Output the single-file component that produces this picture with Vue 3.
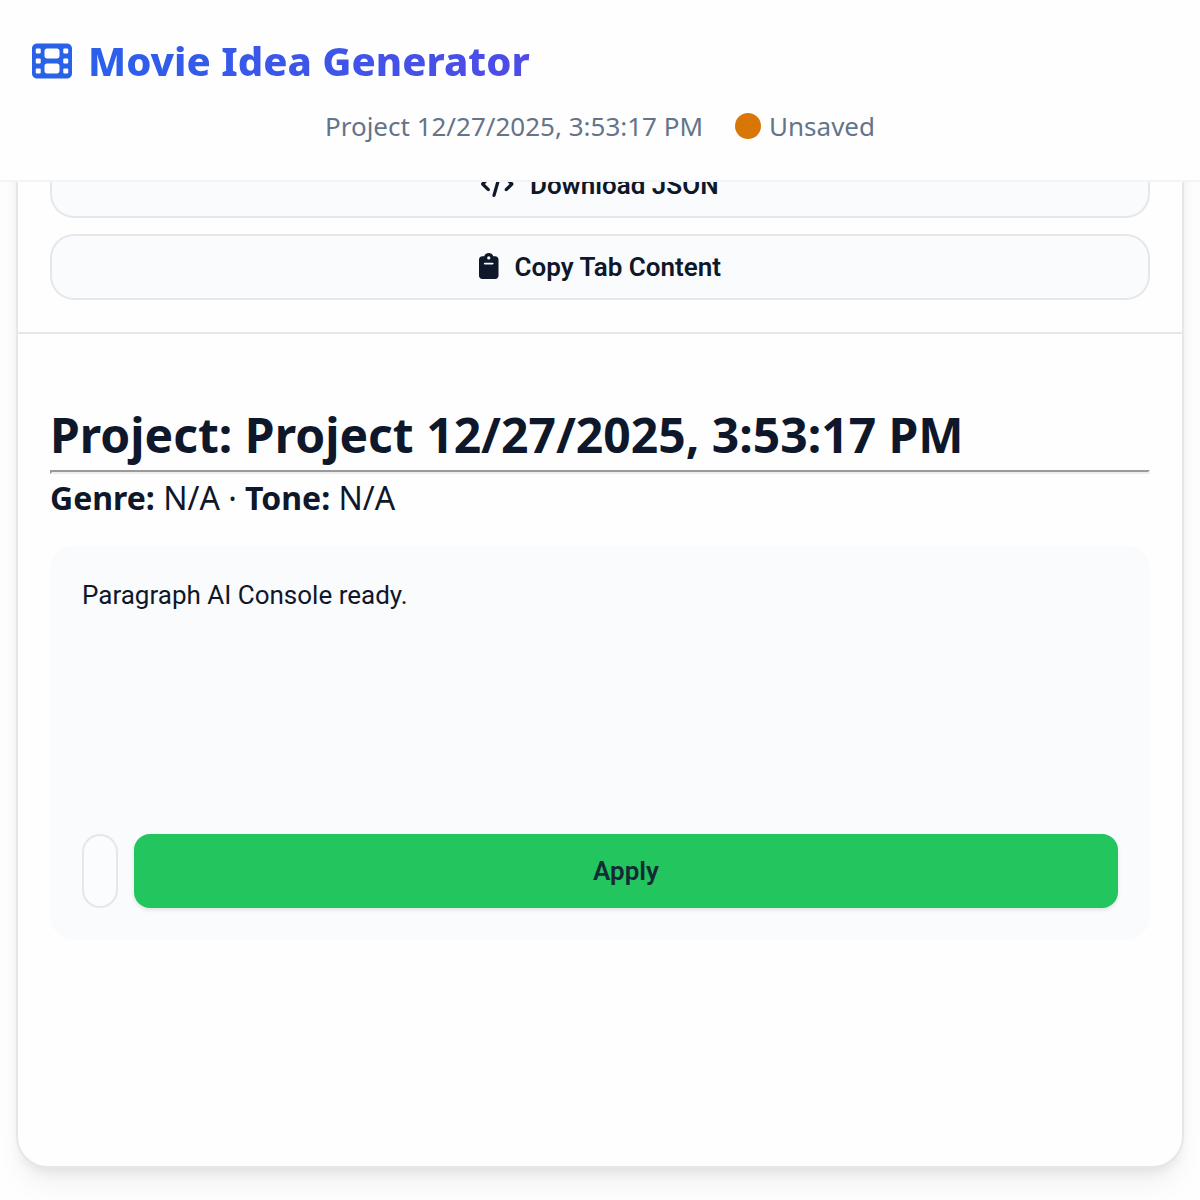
<template>
  <div class="page">
    <header class="app-header">
      <h1 class="brand">
        <svg class="brand-icon" viewBox="0 0 512 512">
          <path fill-rule="evenodd" :d="icons.film" />
        </svg>
        <span class="brand-text">Movie Idea Generator</span>
      </h1>
      <div class="status-bar">
        <span>{{ projectName }}</span>
        <span class="save-status"><i class="status-dot"></i>Unsaved</span>
      </div>
    </header>

    <main class="content">
      <section class="card">
        <div class="toolbar">
          <button v-for="action in actions" :key="action.label" class="action-btn">
            <svg class="action-icon" :viewBox="action.viewBox" :class="action.icon">
              <path :d="icons[action.icon]" />
            </svg>
            {{ action.label }}
          </button>
        </div>

        <div class="document">
          <h2 class="doc-title">Project: {{ projectName }}</h2>
          <hr class="doc-rule" />
          <p class="doc-meta"><strong>Genre:</strong> N/A · <strong>Tone:</strong> N/A</p>

          <div class="console">
            <div class="console-output">Paragraph AI Console ready.</div>
            <div class="console-actions">
              <button class="console-empty"></button>
              <button class="apply-btn">Apply</button>
            </div>
          </div>
        </div>
      </section>
    </main>
  </div>
</template>

<script setup>
const projectName = 'Project 12/27/2025, 3:53:17 PM'

const actions = [
  { label: 'Download JSON', icon: 'code', viewBox: '0 0 640 512' },
  { label: 'Copy Tab Content', icon: 'clipboard', viewBox: '0 0 384 512' }
]

const icons = {
  film: 'M0 96C0 60.7 28.7 32 64 32H448c35.3 0 64 28.7 64 64V416c0 35.3-28.7 64-64 64H64c-35.3 0-64-28.7-64-64V96zM48 368v32c0 8.8 7.2 16 16 16H96c8.8 0 16-7.2 16-16V368c0-8.8-7.2-16-16-16H64c-8.8 0-16 7.2-16 16zm368-16c-8.8 0-16 7.2-16 16v32c0 8.8 7.2 16 16 16h32c8.8 0 16-7.2 16-16V368c0-8.8-7.2-16-16-16H416zM48 240v32c0 8.8 7.2 16 16 16H96c8.8 0 16-7.2 16-16V240c0-8.8-7.2-16-16-16H64c-8.8 0-16 7.2-16 16zm368-16c-8.8 0-16 7.2-16 16v32c0 8.8 7.2 16 16 16h32c8.8 0 16-7.2 16-16V240c0-8.8-7.2-16-16-16H416zM48 112v32c0 8.8 7.2 16 16 16H96c8.8 0 16-7.2 16-16V112c0-8.8-7.2-16-16-16H64c-8.8 0-16 7.2-16 16zM416 96c-8.8 0-16 7.2-16 16v32c0 8.8 7.2 16 16 16h32c8.8 0 16-7.2 16-16V112c0-8.8-7.2-16-16-16H416zM160 128v64c0 17.7 14.3 32 32 32H320c17.7 0 32-14.3 32-32V128c0-17.7-14.3-32-32-32H192c-17.7 0-32 14.3-32 32zm32 160c-17.7 0-32 14.3-32 32v64c0 17.7 14.3 32 32 32H320c17.7 0 32-14.3 32-32V320c0-17.7-14.3-32-32-32H192z',
  code: 'M392.8 1.2c-17-4.9-34.7 5-39.6 22l-128 448c-4.9 17 5 34.7 22 39.6s34.7-5 39.6-22l128-448c4.9-17-5-34.7-22-39.6zm80.6 120.1c-12.5 12.5-12.5 32.8 0 45.3L562.7 256l-89.4 89.4c-12.5 12.5-12.5 32.8 0 45.3s32.8 12.5 45.3 0l112-112c12.5-12.5 12.5-32.8 0-45.3l-112-112c-12.5-12.5-32.8-12.5-45.3 0zm-306.7 0c-12.5-12.5-32.8-12.5-45.3 0l-112 112c-12.5 12.5-12.5 32.8 0 45.3l112 112c12.5 12.5 32.8 12.5 45.3 0s12.5-32.8 0-45.3L77.3 256l89.4-89.4c12.5-12.5 12.5-32.8 0-45.3z',
  clipboard: 'M192 0c-41.8 0-77.4 26.7-90.5 64H64C28.7 64 0 92.7 0 128V448c0 35.3 28.7 64 64 64H320c35.3 0 64-28.7 64-64V128c0-35.3-28.7-64-64-64H282.5C269.4 26.7 233.8 0 192 0zm0 64a32 32 0 1 1 0 64 32 32 0 1 1 0-64zM112 192H272c8.8 0 16 7.2 16 16s-7.2 16-16 16H112c-8.8 0-16-7.2-16-16s7.2-16 16-16z'
}
</script>

<style>
body {
  margin: 0;
  background: #fff;
}
</style>

<style scoped>
.page {
  display: flex;
  flex-direction: column;
  height: 1200px;
  overflow: hidden;
  box-sizing: border-box;
  background: #fefefe;
  color: #0f172a;
  font-family: "Noto Sans", sans-serif;
}

.page * {
  box-sizing: border-box;
}

.app-header {
  flex-shrink: 0;
  height: 182px;
  padding: 31px 32px 0;
  background: #fefefe;
  border-bottom: 2px solid #f3f4f6;
}

.brand {
  display: flex;
  align-items: center;
  gap: 16px;
  height: 60px;
  margin: 0;
  font-size: 40px;
  font-weight: 800;
  line-height: 60px;
}

.brand-icon {
  width: 40px;
  height: 40px;
  fill: #2962e8;
}

.brand-text {
  background: linear-gradient(90deg, #2b60eb, #4f4be6);
  -webkit-background-clip: text;
  background-clip: text;
  color: transparent;
}

.status-bar {
  display: flex;
  justify-content: center;
  gap: 32px;
  margin-top: 16px;
  color: #64748b;
  font-size: 26px;
  line-height: 39px;
}

.save-status {
  display: flex;
  align-items: center;
  gap: 8px;
}

.status-dot {
  width: 26px;
  height: 26px;
  margin-bottom: 1px;
  border-radius: 50%;
  background: #d97706;
}

/* anchored to the bottom, as when the page is scrolled to its end */
.content {
  flex: 1;
  min-height: 0;
  display: flex;
  flex-direction: column;
  justify-content: flex-end;
  padding: 0 16px 32px;
  overflow: hidden;
}

.card {
  flex-shrink: 0;
  border: 2px solid #e5e7eb;
  border-radius: 32px;
  background: #fefefe;
  box-shadow: 0 20px 30px -6px rgba(0, 0, 0, 0.06), 0 8px 12px -4px rgba(0, 0, 0, 0.08);
}

.toolbar {
  display: flex;
  flex-direction: column;
  gap: 16px;
  padding: 32px;
  border-bottom: 2px solid #e5e7eb;
}

.action-btn {
  display: flex;
  align-items: center;
  justify-content: center;
  gap: 16px;
  height: 66px;
  padding: 0;
  border: 2px solid #e5e7eb;
  border-radius: 24px;
  background: #f9fbfd;
  color: #0f172a;
  font-family: Roboto, sans-serif;
  font-size: 26px;
  font-weight: 600;
}

.action-icon {
  height: 26px;
  margin-bottom: 2px;
  fill: currentColor;
}

.action-icon.code {
  width: 32.5px;
}

.action-icon.clipboard {
  width: 19.5px;
}

.document {
  height: 832px;
  padding: 64px 32px 32px;
}

.doc-title {
  height: 72px;
  margin: 0;
  font-size: 48px;
  font-weight: 700;
  line-height: 74px;
}

.doc-rule {
  height: 4px;
  margin: 0;
  border: 2px solid;
  border-color: #9a9a9a #eee #eee #9a9a9a;
}

.doc-meta {
  margin: 0 0 24px;
  font-size: 32px;
  line-height: 48px;
}

.console {
  display: flex;
  flex-direction: column;
  justify-content: space-between;
  height: 394px;
  padding: 32px;
  border-radius: 24px;
  background: #f9fbfd;
  font-family: Roboto, sans-serif;
}

.console-output {
  font-size: 26px;
  line-height: 34px;
}

.console-actions {
  display: flex;
  gap: 16px;
  height: 74px;
}

.console-empty {
  width: 36px;
  padding: 0;
  border: 2px solid #e5e7eb;
  border-radius: 18px;
  background: #fbfcfd;
}

.apply-btn {
  flex: 1;
  padding: 0;
  border: none;
  border-radius: 16px;
  background: #22c55e;
  box-shadow: 0 2px 4px rgba(0, 0, 0, 0.1);
  color: #142b35;
  font-family: Roboto, sans-serif;
  font-size: 26px;
  font-weight: 600;
}
</style>
